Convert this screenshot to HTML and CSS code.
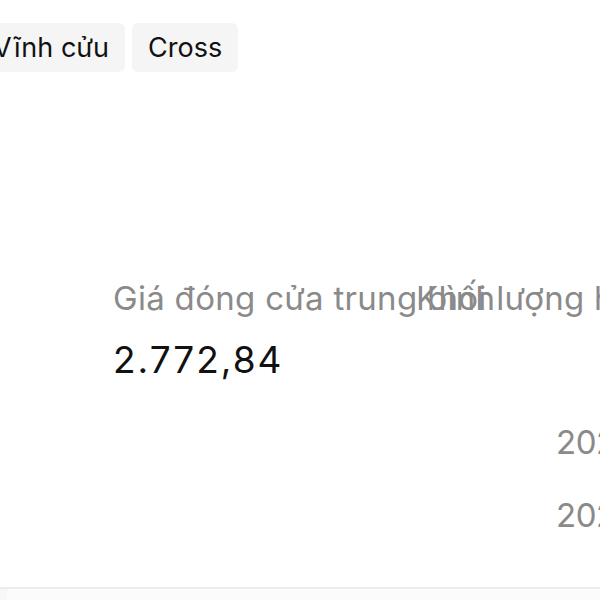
FILE: index.html
```html
<!DOCTYPE html>
<html lang="vi">
<head>
    <meta charset="UTF-8">
    <meta name="viewport" content="width=device-width, initial-scale=1.0">
    <title>Giá đóng cửa</title>
    <link rel="stylesheet" href="styles.css">
</head>
<body>
    <div class="page">
        <div class="tabs">
            <button class="tab">Vĩnh cửu</button>
            <button class="tab">Cross</button>
        </div>

        <div class="stats">
            <div class="stat">
                <div class="stat-label">Giá đóng cửa trung bình</div>
                <div class="stat-value">2.772,84</div>
            </div>
            <div class="stat">
                <div class="stat-label">Khối lượng hợp đồng</div>
            </div>
        </div>

        <div class="dates">
            <div class="date-row">2024-05-01</div>
            <div class="date-row">2024-04-30</div>
        </div>

        <div class="footer">
            <div class="footer-inner"></div>
        </div>
    </div>
</body>
</html>
```

FILE: styles.css
```css
:root {
    --text: #111111;
    --muted: #8a8a8a;
    --tab-bg: #f5f5f5;
    --line: #ececec;
}

html, body {
    margin: 0;
    padding: 0;
    height: 100%;
    overflow: hidden;
    background: #ffffff;
}

body {
    font-family: Inter, "Open Sans", sans-serif;
    color: var(--text);
}

.page {
    height: 600px;
    display: flex;
    flex-direction: column;
}

.tabs {
    display: flex;
    gap: 7px;
    margin: 23px 0 0 -23px;
}

.tab {
    font-family: inherit;
    font-size: 27px;
    color: var(--text);
    background: var(--tab-bg);
    border: none;
    border-radius: 6px;
    height: 49px;
    padding: 0 16px;
    white-space: nowrap;
}

.stats {
    display: grid;
    grid-template-columns: 303px 1fr;
    padding-left: 113px;
    margin-top: 206px;
    white-space: nowrap;
}

.stat-label {
    font-size: 33px;
    line-height: 40px;
    letter-spacing: 0.3px;
    color: var(--muted);
}

.stat-value {
    font-size: 37px;
    line-height: 44px;
    letter-spacing: 2px;
    margin-top: 20px;
}

.dates {
    padding-left: 556px;
    margin-top: 24px;
    white-space: nowrap;
}

.date-row {
    font-size: 33px;
    line-height: 73px;
    letter-spacing: -0.5px;
    color: var(--muted);
}

.footer {
    margin-top: auto;
    height: 11px;
    border-top: 2px solid var(--line);
    background: #f7f7f7;
    padding-left: 7px;
}

.footer-inner {
    height: 100%;
    background: #fbfbfb;
}
```
